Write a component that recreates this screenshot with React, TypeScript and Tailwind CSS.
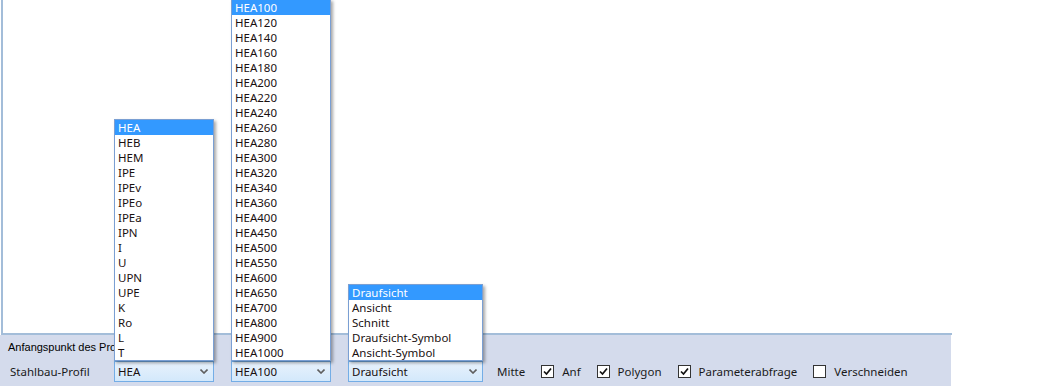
import React from 'react';

const PROFILES = ['HEA', 'HEB', 'HEM', 'IPE', 'IPEv', 'IPEo', 'IPEa', 'IPN', 'I', 'U', 'UPN', 'UPE', 'K', 'Ro', 'L', 'T'];
const SIZES = [
  '100', '120', '140', '160', '180', '200', '220', '240', '260', '280', '300', '320',
  '340', '360', '400', '450', '500', '550', '600', '650', '700', '800', '900', '1000',
].map((s) => `HEA${s}`);
const VIEWS = ['Draufsicht', 'Ansicht', 'Schnitt', 'Draufsicht-Symbol', 'Ansicht-Symbol'];

function Chevron() {
  return (
    <svg width="8" height="5" viewBox="0 0 8 5" className="shrink-0">
      <path d="M0.5 0.5 L4 4 L7.5 0.5" fill="none" stroke="#5f5f5f" strokeWidth="1.6" />
    </svg>
  );
}

// open drop-down list, sits above its combo box
function DropList({ items, selected }: { items: string[]; selected: string }) {
  return (
    <ul className="absolute bottom-full left-0 w-full bg-white border border-[#7a9fd3] shadow-[2px_2px_3px_rgba(0,0,0,0.35)] z-10">
      {items.map((item) => (
        <li
          key={item}
          className={`h-[15px] leading-[15px] pl-[3px] ${
            item === selected ? 'bg-[#3399ff] text-white' : 'text-[#1a1010]'
          }`}
        >
          {item}
        </li>
      ))}
    </ul>
  );
}

function Combo({ value, items, width }: { value: string; items: string[]; width: string }) {
  return (
    <div className={`relative ${width}`}>
      <DropList items={items} selected={value} />
      <div className="h-[21px] flex items-center justify-between pl-[3px] pr-[5px] border border-[#74ade6] bg-gradient-to-b from-[#e8f2fc] to-[#d3e8fb] text-[#1a1010]">
        <span>{value}</span>
        <Chevron />
      </div>
    </div>
  );
}

function Check({ label, checked }: { label: string; checked: boolean }) {
  return (
    <div className="flex items-center gap-[8px] ml-[16px]">
      <div className="w-[13px] h-[13px] border border-[#333] bg-white flex items-center justify-center">
        {checked && (
          <svg width="9" height="9" viewBox="0 0 9 9">
            <path d="M1 4.5 L3.5 7 L8 1.5" fill="none" stroke="#111" strokeWidth="1.7" />
          </svg>
        )}
      </div>
      <span>{label}</span>
    </div>
  );
}

export default function App() {
  return (
    <div className="w-[1050px] h-[386px] bg-white overflow-hidden font-['Noto_Sans',sans-serif] text-[11.5px] text-[#1a1a1a]">
      <div className="w-[951px] h-[335px] ml-px border-l-2 border-b-2 border-[#a3bdd9] bg-white" />
      <div className="w-[951px] h-[51px] bg-[#d4dbec] flex flex-col">
        {/* the open profile list covers the end of this label */}
        <div className="pl-[8px] pt-[4px] h-[26px] w-[114px] overflow-hidden whitespace-nowrap font-['Liberation_Sans',sans-serif] text-[11px] text-black">
          Anfangspunkt des Profils
        </div>
        <div className="flex items-center">
          <span className="w-[114px] pl-[10px] shrink-0">Stahlbau-Profil</span>
          <Combo value="HEA" items={PROFILES} width="w-[100px]" />
          <div className="ml-[17px]">
            <Combo value="HEA100" items={SIZES} width="w-[100px]" />
          </div>
          <div className="ml-[17px]">
            <Combo value="Draufsicht" items={VIEWS} width="w-[135px]" />
          </div>
          <span className="ml-[14px]">Mitte</span>
          <Check label="Anf" checked />
          <Check label="Polygon" checked />
          <Check label="Parameterabfrage" checked />
          <Check label="Verschneiden" checked={false} />
        </div>
      </div>
    </div>
  );
}
